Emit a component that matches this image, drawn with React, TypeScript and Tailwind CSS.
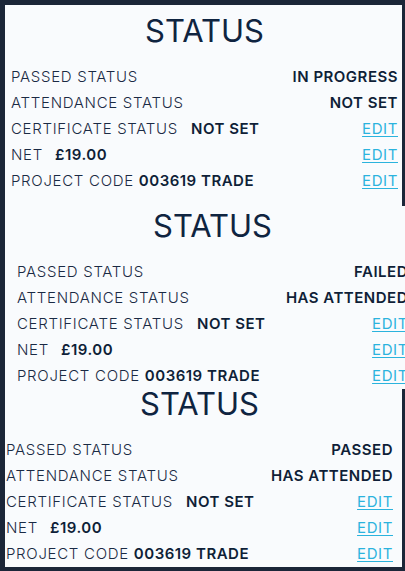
import React from 'react';

type Row = {
  label: string;
  value?: string;
  gap?: string;
  right?: string;
  edit?: boolean;
};

type Block = {
  rows: Row[];
  className: string;
};

const blocks: Block[] = [
  {
    className: 'pt-[6px] pl-[6px] pr-[4px]',
    rows: [
      { label: 'PASSED STATUS', right: 'IN PROGRESS' },
      { label: 'ATTENDANCE STATUS', right: 'NOT SET' },
      { label: 'CERTIFICATE STATUS', value: 'NOT SET', gap: 'ml-[13px]', edit: true },
      { label: 'NET', value: '£19.00', gap: 'ml-[12px]', edit: true },
      { label: 'PROJECT CODE', value: '003619 TRADE', gap: 'ml-[5px]', edit: true },
    ],
  },
  {
    className: 'mt-[12px] pl-[12px] mr-[-6px] relative',
    rows: [
      { label: 'PASSED STATUS', right: 'FAILED' },
      { label: 'ATTENDANCE STATUS', right: 'HAS ATTENDED' },
      { label: 'CERTIFICATE STATUS', value: 'NOT SET', gap: 'ml-[13px]', edit: true },
      { label: 'NET', value: '£19.00', gap: 'ml-[12px]', edit: true },
      { label: 'PROJECT CODE', value: '003619 TRADE', gap: 'ml-[5px]', edit: true },
    ],
  },
  {
    className: 'mt-[-5px] pl-[1px] pr-[9px]',
    rows: [
      { label: 'PASSED STATUS', right: 'PASSED' },
      { label: 'ATTENDANCE STATUS', right: 'HAS ATTENDED' },
      { label: 'CERTIFICATE STATUS', value: 'NOT SET', gap: 'ml-[13px]', edit: true },
      { label: 'NET', value: '£19.00', gap: 'ml-[12px]', edit: true },
      { label: 'PROJECT CODE', value: '003619 TRADE', gap: 'ml-[5px]', edit: true },
    ],
  },
];

function StatusBlock({ block }: { block: Block }) {
  return (
    <section className={`bg-[#f9fbfd] ${block.className}`}>
      <h2 className="h-[40px] text-center text-[31px] leading-[40px] font-normal text-[#0f2440]">STATUS</h2>
      <div className="mt-[13px]">
        {block.rows.map((row) => (
          <div key={row.label} className="flex h-[26px] items-center justify-between text-[15px] leading-[26px]">
            <div className="flex whitespace-nowrap">
              <span className="font-light tracking-[0.7px] text-[#1a2a44]">{row.label}</span>
              {row.value && (
                <span className={`font-semibold tracking-[0.5px] text-[#0f1f38] ${row.gap}`}>{row.value}</span>
              )}
            </div>
            {row.edit ? (
              <a href="#" className="tracking-[0.6px] text-[#2bb3dd] underline underline-offset-2">EDIT</a>
            ) : (
              <span className="whitespace-nowrap font-semibold tracking-[0.5px] text-[#0f1f38]">{row.right}</span>
            )}
          </div>
        ))}
      </div>
    </section>
  );
}

export default function App() {
  return (
    <div
      className="h-[571px] w-[405px] overflow-hidden bg-[#1b2638] pt-[5px] pl-[5px] pr-[3px]"
      style={{ fontFamily: 'Inter, "Noto Sans", sans-serif' }}
    >
      <div className="flex h-[561px] flex-col bg-[#f9fbfd]">
        {blocks.map((b, i) => (
          <StatusBlock key={i} block={b} />
        ))}
      </div>
    </div>
  );
}
